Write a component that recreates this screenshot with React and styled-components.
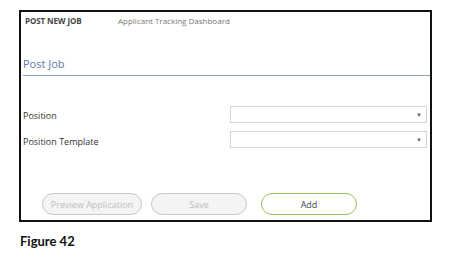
import React from 'react';
import styled, { createGlobalStyle } from 'styled-components';

const GlobalStyle = createGlobalStyle`
  body {
    margin: 0;
    background: #fff;
    font-family: 'Open Sans', 'Liberation Sans', sans-serif;
  }
`;

const Page = styled.div`
  padding: 10px 0 0 19px;
`;

const Frame = styled.div`
  width: 413px;
  height: 212px;
  box-sizing: border-box;
  border: 2px solid #111;
  display: flex;
  flex-direction: column;
  padding: 0 2px 5px 2px;
`;

const Header = styled.div`
  display: flex;
  align-items: center;
  height: 15px;
  padding: 1px 0 0 2px;
  font-size: 8px;
  line-height: 11px;
`;

const Crumb = styled.span`
  color: ${(p) => (p.$strong ? '#444' : '#777')};
  font-weight: ${(p) => (p.$strong ? 700 : 400)};
  width: ${(p) => (p.$strong ? '93px' : 'auto')};
  letter-spacing: ${(p) => (p.$strong ? '-0.1px' : '0')};
`;

const Title = styled.div`
  margin: 28px -2px 0 0;
  padding-bottom: 4px;
  border-bottom: 1px solid #8fa0b0;
  color: #5d7b9b;
  font-size: 11px;
  line-height: 15px;
`;

const Fields = styled.div`
  display: flex;
  flex-direction: column;
  gap: 8px;
  margin-top: 30px;
`;

const Row = styled.div`
  display: flex;
  align-items: center;
  height: 17px;
`;

const Label = styled.label`
  width: 207px;
  color: #333;
  font-size: 9px;
  padding-top: ${(p) => (p.$low ? '3px' : '2px')};
`;

const Select = styled.div`
  width: 197px;
  height: 17px;
  box-sizing: border-box;
  border: 1px solid #d4d4d4;
  display: flex;
  align-items: center;
  justify-content: flex-end;
  padding-right: 4px;
  color: #666;
  font-size: 6px;
`;

const Actions = styled.div`
  display: flex;
  margin-top: auto;
  padding-left: 19px;
`;

const Button = styled.button`
  width: ${(p) => p.$w}px;
  height: 22px;
  margin-right: ${(p) => p.$gap || 0}px;
  box-sizing: border-box;
  border-radius: 11px;
  border: 1.5px solid ${(p) => (p.$primary ? '#97c15a' : '#c9c9c9')};
  background: ${(p) => (p.$primary ? '#fff' : '#f4f4f4')};
  color: ${(p) => (p.$primary ? '#444' : '#bdbdbd')};
  font-family: 'Open Sans', sans-serif;
  font-size: 9px;
  padding: 0;
`;

const Caption = styled.div`
  margin: 12px 0 0 1px;
  font-family: Lato, 'Liberation Sans', sans-serif;
  font-weight: 700;
  font-size: 13px;
  line-height: 15px;
  color: #111;
`;

export default function App() {
  return (
    <Page>
      <GlobalStyle />
      <Frame>
        <Header>
          <Crumb $strong>POST NEW JOB</Crumb>
          <Crumb>Applicant Tracking Dashboard</Crumb>
        </Header>
        <Title>Post Job</Title>
        <Fields>
          <Row>
            <Label>Position</Label>
            <Select>▼</Select>
          </Row>
          <Row>
            <Label $low>Position Template</Label>
            <Select>▼</Select>
          </Row>
        </Fields>
        <Actions>
          <Button $w={100} $gap={9} disabled>Preview Application</Button>
          <Button $w={96} $gap={14} disabled>Save</Button>
          <Button $w={96} $primary>Add</Button>
        </Actions>
      </Frame>
      <Caption>Figure 42</Caption>
    </Page>
  );
}
